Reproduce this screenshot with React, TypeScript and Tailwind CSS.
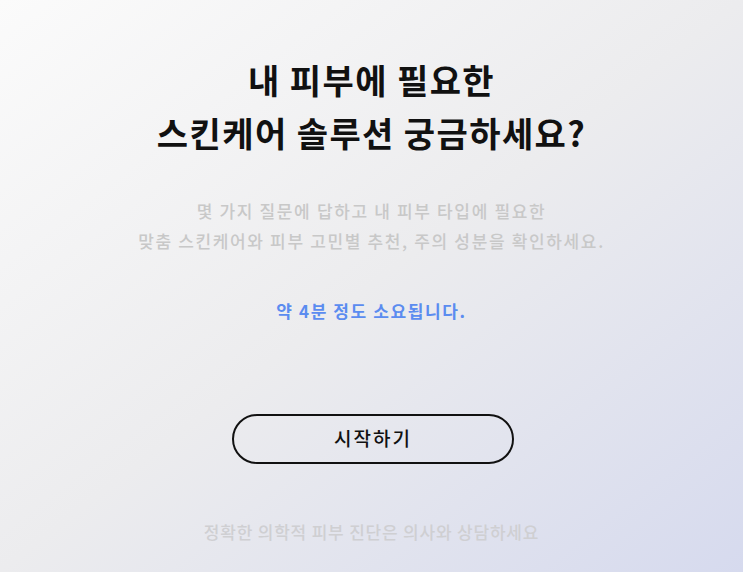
export default function App() {
  return (
    <div
      className="flex h-[572px] w-full flex-col items-center bg-gradient-to-br from-[#fbfbfb] via-[#ececee] to-[#d6daee] text-center"
      style={{ fontFamily: '"Noto Sans CJK KR", "Noto Sans", sans-serif' }}
    >
      <h1 className="mt-[53px] text-[34px] font-bold leading-[53px] tracking-[1.4px] text-[#111]">
        내 피부에 필요한
        <br />
        스킨케어 솔루션 궁금하세요?
      </h1>

      <p className="mt-[37px] text-[17px] font-medium leading-[30px] tracking-[1.65px] text-[#c8c8c8]">
        몇 가지 질문에 답하고 내 피부 타입에 필요한
        <br />
        맞춤 스킨케어와 피부 고민별 추천, 주의 성분을 확인하세요.
      </p>

      <p className="mt-[42px] text-[17px] font-bold tracking-[1.6px] text-[#5b8cf0]">
        약 4분 정도 소요됩니다.
      </p>

      <button className="ml-[3px] mt-[90px] flex h-[50px] w-[282px] items-center justify-center rounded-full border-2 border-[#111] text-[19px] font-medium tracking-[2px] text-[#111]">
        시작하기
      </button>

      <p className="mt-[55px] text-[17px] font-medium tracking-[0.8px] text-[#cfcfd2]">
        정확한 의학적 피부 진단은 의사와 상담하세요
      </p>
    </div>
  );
}
